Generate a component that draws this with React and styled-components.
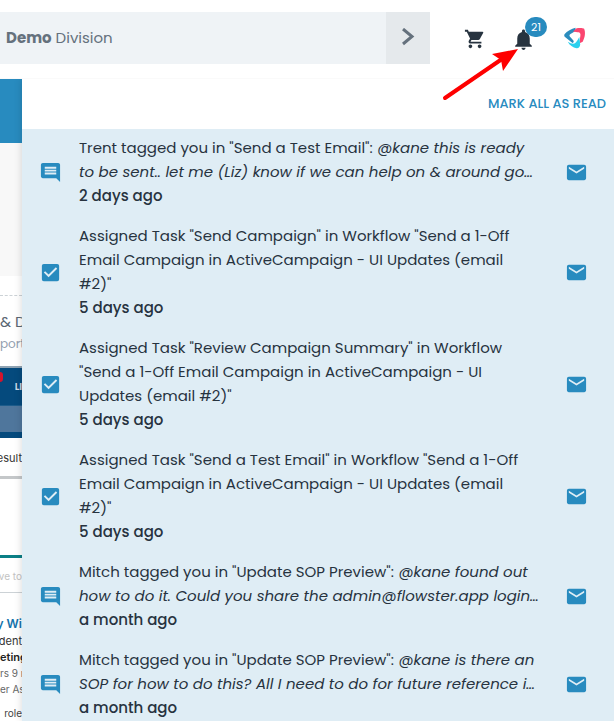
import React from "react";
import styled, { createGlobalStyle, css } from "styled-components";
import { MdCheckBox, MdComment, MdEmail, MdNotifications, MdShoppingCart } from "react-icons/md";

const BLUE = "#288bbf";
const INK = "#27333f";

const NOTIFICATIONS = [
    {
        id: 1,
        type: "comment",
        title: 'Trent tagged you in "Send a Test Email":',
        quote: ["@kane this is ready", "to be sent.. let me (Liz) know if we can help on & around go…"],
        time: "2 days ago"
    },
    {
        id: 2,
        type: "task",
        title: 'Assigned Task "Send Campaign" in Workflow "Send a 1-Off Email Campaign in ActiveCampaign - UI Updates (email #2)"',
        time: "5 days ago"
    },
    {
        id: 3,
        type: "task",
        title:
            'Assigned Task "Review Campaign Summary" in Workflow "Send a 1-Off Email Campaign in ActiveCampaign - UI Updates (email #2)"',
        time: "5 days ago"
    },
    {
        id: 4,
        type: "task",
        title: 'Assigned Task "Send a Test Email" in Workflow "Send a 1-Off Email Campaign in ActiveCampaign - UI Updates (email #2)"',
        time: "5 days ago"
    },
    {
        id: 5,
        type: "comment",
        title: 'Mitch tagged you in "Update SOP Preview":',
        quote: ["@kane found out", "how to do it. Could you share the admin@flowster.app login…"],
        time: "a month ago"
    },
    {
        id: 6,
        type: "comment",
        title: 'Mitch tagged you in "Update SOP Preview":',
        quote: ["@kane is there an", "SOP for how to do this? All I need to do for future reference i…"],
        time: "a month ago"
    }
];

const GlobalStyle = createGlobalStyle`
    * {
        box-sizing: border-box;
    }

    body {
        margin: 0;
        background: #fff;
        color: ${INK};
        font-family: Poppins, Inter, sans-serif;
        font-size: 15px;
    }

    button {
        margin: 0;
        padding: 0;
        border: 0;
        background: none;
        color: inherit;
        font: inherit;
        cursor: pointer;
    }
`;
const Page = styled.div`
    height: 100vh;
    display: flex;
    flex-direction: column;
    overflow: hidden;
`;
const Header = styled.header`
    position: relative;
    z-index: 1;
    flex: none;
    height: 79px;
    padding: 12px 27px 12px 0;
    display: flex;
    align-items: flex-start;
    background: #fff;
    border-bottom: 1px solid #fafafa;
`;
const DivisionBar = styled.div`
    flex: 1;
    height: 52px;
    padding-left: 6px;
    display: flex;
    align-items: center;
    justify-content: space-between;
    background: #eff3f6;
    color: #65717d;
`;
const DivisionName = styled.span`
    padding-bottom: 2px;
`;
const DivisionToggle = styled.button`
    width: 44px;
    height: 52px;
    padding-bottom: 2px;
    display: flex;
    align-items: center;
    justify-content: center;
    background: #e5e9ec;
`;
const HeaderActions = styled.div`
    height: 54px;
    margin-left: 33px;
    display: flex;
    align-items: center;
    gap: 24px;
`;
const IconButton = styled.button`
    position: relative;
    width: 24px;
    height: 24px;
    display: flex;
    align-items: center;
    justify-content: center;
    color: ${props => props.$color || INK};

    > svg {
        flex: none;
    }
`;
const AccountButton = styled(IconButton)`
    margin-left: 4px;
    padding-bottom: 2px;
`;
const Badge = styled.span`
    position: absolute;
    top: -10px;
    left: 14px;
    width: 22px;
    height: 20px;
    border-radius: 10px;
    background: ${BLUE};
    color: #fff;
    font-size: 11px;
    line-height: 20px;
    text-align: center;
`;
const Pointer = styled.svg`
    position: absolute;
    top: 46px;
    right: 94px;
    pointer-events: none;
`;
const Body = styled.main`
    flex: 1;
    min-height: 0;
    display: flex;
`;
const Backdrop = styled.div`
    width: 22px;
    flex: none;
    overflow: hidden;
    white-space: nowrap;
`;
const Block = styled.div`
    height: ${props => props.$height}px;
    background: ${props => props.$color || "#fff"};
`;
const Line = styled.div`
    height: ${props => props.$height}px;
    line-height: ${props => props.$height}px;
    display: flex;
    justify-content: ${props => (props.$start ? "flex-start" : "flex-end")};
    font-family: ${props => (props.$plain ? "Inter, sans-serif" : "inherit")};
    font-size: ${props => props.$size || 11}px;
    font-weight: ${props => (props.$bold ? 600 : 400)};
    color: ${props => props.$color || "#333"};
`;
const Divider = styled.div`
    border-top: 1px ${props => (props.$dashed ? "dashed" : "solid")} #ccd2d6;
`;
const BannerTop = styled.div`
    height: 40px;
    border-top: 2px solid #8fa3b3;
    border-bottom: 1px solid #1d5c8b;
    background: #054a7d;
    display: flex;
    align-items: center;
    justify-content: space-between;
    color: #cfdce8;
    font-size: 10px;
    font-weight: 600;
`;
const RecordDot = styled.span`
    width: 3px;
    height: 10px;
    margin-bottom: 20px;
    border-radius: 0 5px 5px 0;
    background: #d5142c;
`;
const BannerBottom = styled.div`
    height: 32px;
    border-bottom: 6px solid #054a7d;
    background: #4f769c;
`;
const Panel = styled.section`
    flex: 1;
    min-width: 0;
    background: #dfedf5;
    box-shadow: 0 0 8px rgba(0, 0, 0, 0.16);
`;
const PanelHeader = styled.div`
    height: 50px;
    padding-right: 8px;
    display: flex;
    align-items: center;
    justify-content: flex-end;
    background: #fff;
`;
const MarkAllButton = styled.button`
    color: ${BLUE};
    font-size: 13px;
    font-weight: 500;
    text-transform: uppercase;
`;
const List = styled.ul`
    margin: 0;
    padding: 0;
    list-style: none;
`;
const Item = styled.li`
    padding: 7px 26px 9px 16px;
    display: flex;
    align-items: center;
    line-height: 24px;
`;
const TypeIcon = styled.span`
    width: 24px;
    flex: none;
    display: flex;
    justify-content: center;
    color: ${BLUE};
`;
const ItemText = styled.div`
    flex: 1;
    min-width: 0;
    padding: 0 32px 0 17px;
`;
const ItemTitle = styled.div`
    ${props =>
        props.$nowrap &&
        css`
            white-space: nowrap;
        `}
`;
const ItemTime = styled.time`
    display: block;
    font-weight: 500;
`;

function BrandLogo() {
    return (
        <svg width="22" height="22" viewBox="0 0 22 22">
            <path
                d="M11.500 .8 C7.500 1.600 3 4.200 .5 7.200 C0 8.200 .2 9.200 1 10 L8.500 16 C9.800 15.500 10 14.600 9.400 13.600 L5.800 9.600 C5.200 8.500 5.400 7.800 6.500 7 L11.500 4 Z"
                fill="#2b8cbd"
            />
            <path
                d="M9 4.600 L12.600 1.300 C15.500 .7 18.500 .7 20 1.600 C21.800 5.500 21 10.500 18.700 14.800 L15.600 16.200 C15.600 12.500 16.600 9 16.400 7 C16 5.600 15 5.200 13.500 5.200 Z"
                fill="#fb4670"
            />
            <path
                d="M3.800 14.800 C6.500 16.600 9.500 17.200 11 16.200 C12.700 15 14 12.400 15.300 10 L16.200 17.500 C16 20 14.500 21.500 12.500 21.200 C9 20.600 5.500 18.300 3.800 14.800 Z"
                fill="#2bd0ee"
            />
        </svg>
    );
}

function PageBackdrop() {
    return (
        <Backdrop>
            <Block $height={64} $color={BLUE} />
            <Block $height={133} $color="#f8f8f8" />
            <Block $height={19} />
            <Divider $dashed />
            <Block $height={14} />
            <Line $start $height={24} $size={15} $color="#5b6773">
                & D
            </Line>
            <Line $start $height={20} $size={12} $color="#93a0af">
                port
            </Line>
            <Block $height={12} />
            <BannerTop>
                <RecordDot />
                LI
            </BannerTop>
            <BannerBottom />
            <Block $height={8} />
            <Line $plain $height={24}>
                esult
            </Line>
            <Block $height={6} />
            <Block $height={3} $color="#c4c7c9" />
            <Block $height={76} />
            <Block $height={3} $color="#0b7f86" />
            <Block $height={10} />
            <Line $plain $height={16} $size={10} $color="#c3c3c3">
                ve to
            </Line>
            <Block $height={8} />
            <Divider />
            <Block $height={22} />
            <Line $plain $bold $height={18} $size={12} $color="#1472ab">
                y Wi
            </Line>
            <Line $plain $height={16}>dent</Line>
            <Line $plain $bold $start $height={16} $color="#222">
                eting
            </Line>
            <Line $plain $start $height={16} $size={10} $color="#666">
                rs 9 m
            </Line>
            <Line $plain $start $height={16} $size={10} $color="#666">
                er Asi
            </Line>
            <Block $height={8} />
            <Line $plain $height={16} $size={10} $color="#444">
                role
            </Line>
        </Backdrop>
    );
}

function Notification({ item }) {
    return (
        <Item>
            <TypeIcon>{item.type === "task" ? <MdCheckBox size={23} /> : <MdComment size={23} />}</TypeIcon>
            <ItemText>
                <ItemTitle $nowrap={Boolean(item.quote)}>
                    {item.title}
                    {item.quote && (
                        <em>
                            {" "}
                            {item.quote[0]}
                            <br />
                            {item.quote[1]}
                        </em>
                    )}
                </ItemTitle>
                <ItemTime>{item.time}</ItemTime>
            </ItemText>
            <IconButton $color={BLUE} aria-label="Mark as read">
                <MdEmail size={23} />
            </IconButton>
        </Item>
    );
}

export default function App() {
    return (
        <Page>
            <GlobalStyle />
            <Header>
                <DivisionBar>
                    <DivisionName>
                        <strong>Demo</strong> Division
                    </DivisionName>
                    <DivisionToggle aria-label="Switch division">
                        <svg width="14" height="18" viewBox="0 0 14 18" fill="none" stroke="#65717d" strokeWidth="3">
                            <path d="M2 1 L11 8.500 L2 16" />
                        </svg>
                    </DivisionToggle>
                </DivisionBar>
                <HeaderActions>
                    <IconButton aria-label="Cart">
                        <MdShoppingCart size={22} />
                    </IconButton>
                    <IconButton aria-label="Notifications">
                        <MdNotifications size={25} />
                        <Badge>21</Badge>
                    </IconButton>
                    <AccountButton aria-label="Account">
                        <BrandLogo />
                    </AccountButton>
                </HeaderActions>
                <Pointer width="80" height="56" viewBox="0 0 80 56">
                    <path d="M5 52 L62 13" stroke="#fe0000" strokeWidth="4" strokeLinecap="round" />
                    <path d="M78 3 L52 8 L61 14 L63 25 Z" fill="#fe0000" />
                </Pointer>
            </Header>
            <Body>
                <PageBackdrop />
                <Panel>
                    <PanelHeader>
                        <MarkAllButton>Mark all as read</MarkAllButton>
                    </PanelHeader>
                    <List>
                        {NOTIFICATIONS.map(item => (
                            <Notification key={item.id} item={item} />
                        ))}
                    </List>
                </Panel>
            </Body>
        </Page>
    );
}
